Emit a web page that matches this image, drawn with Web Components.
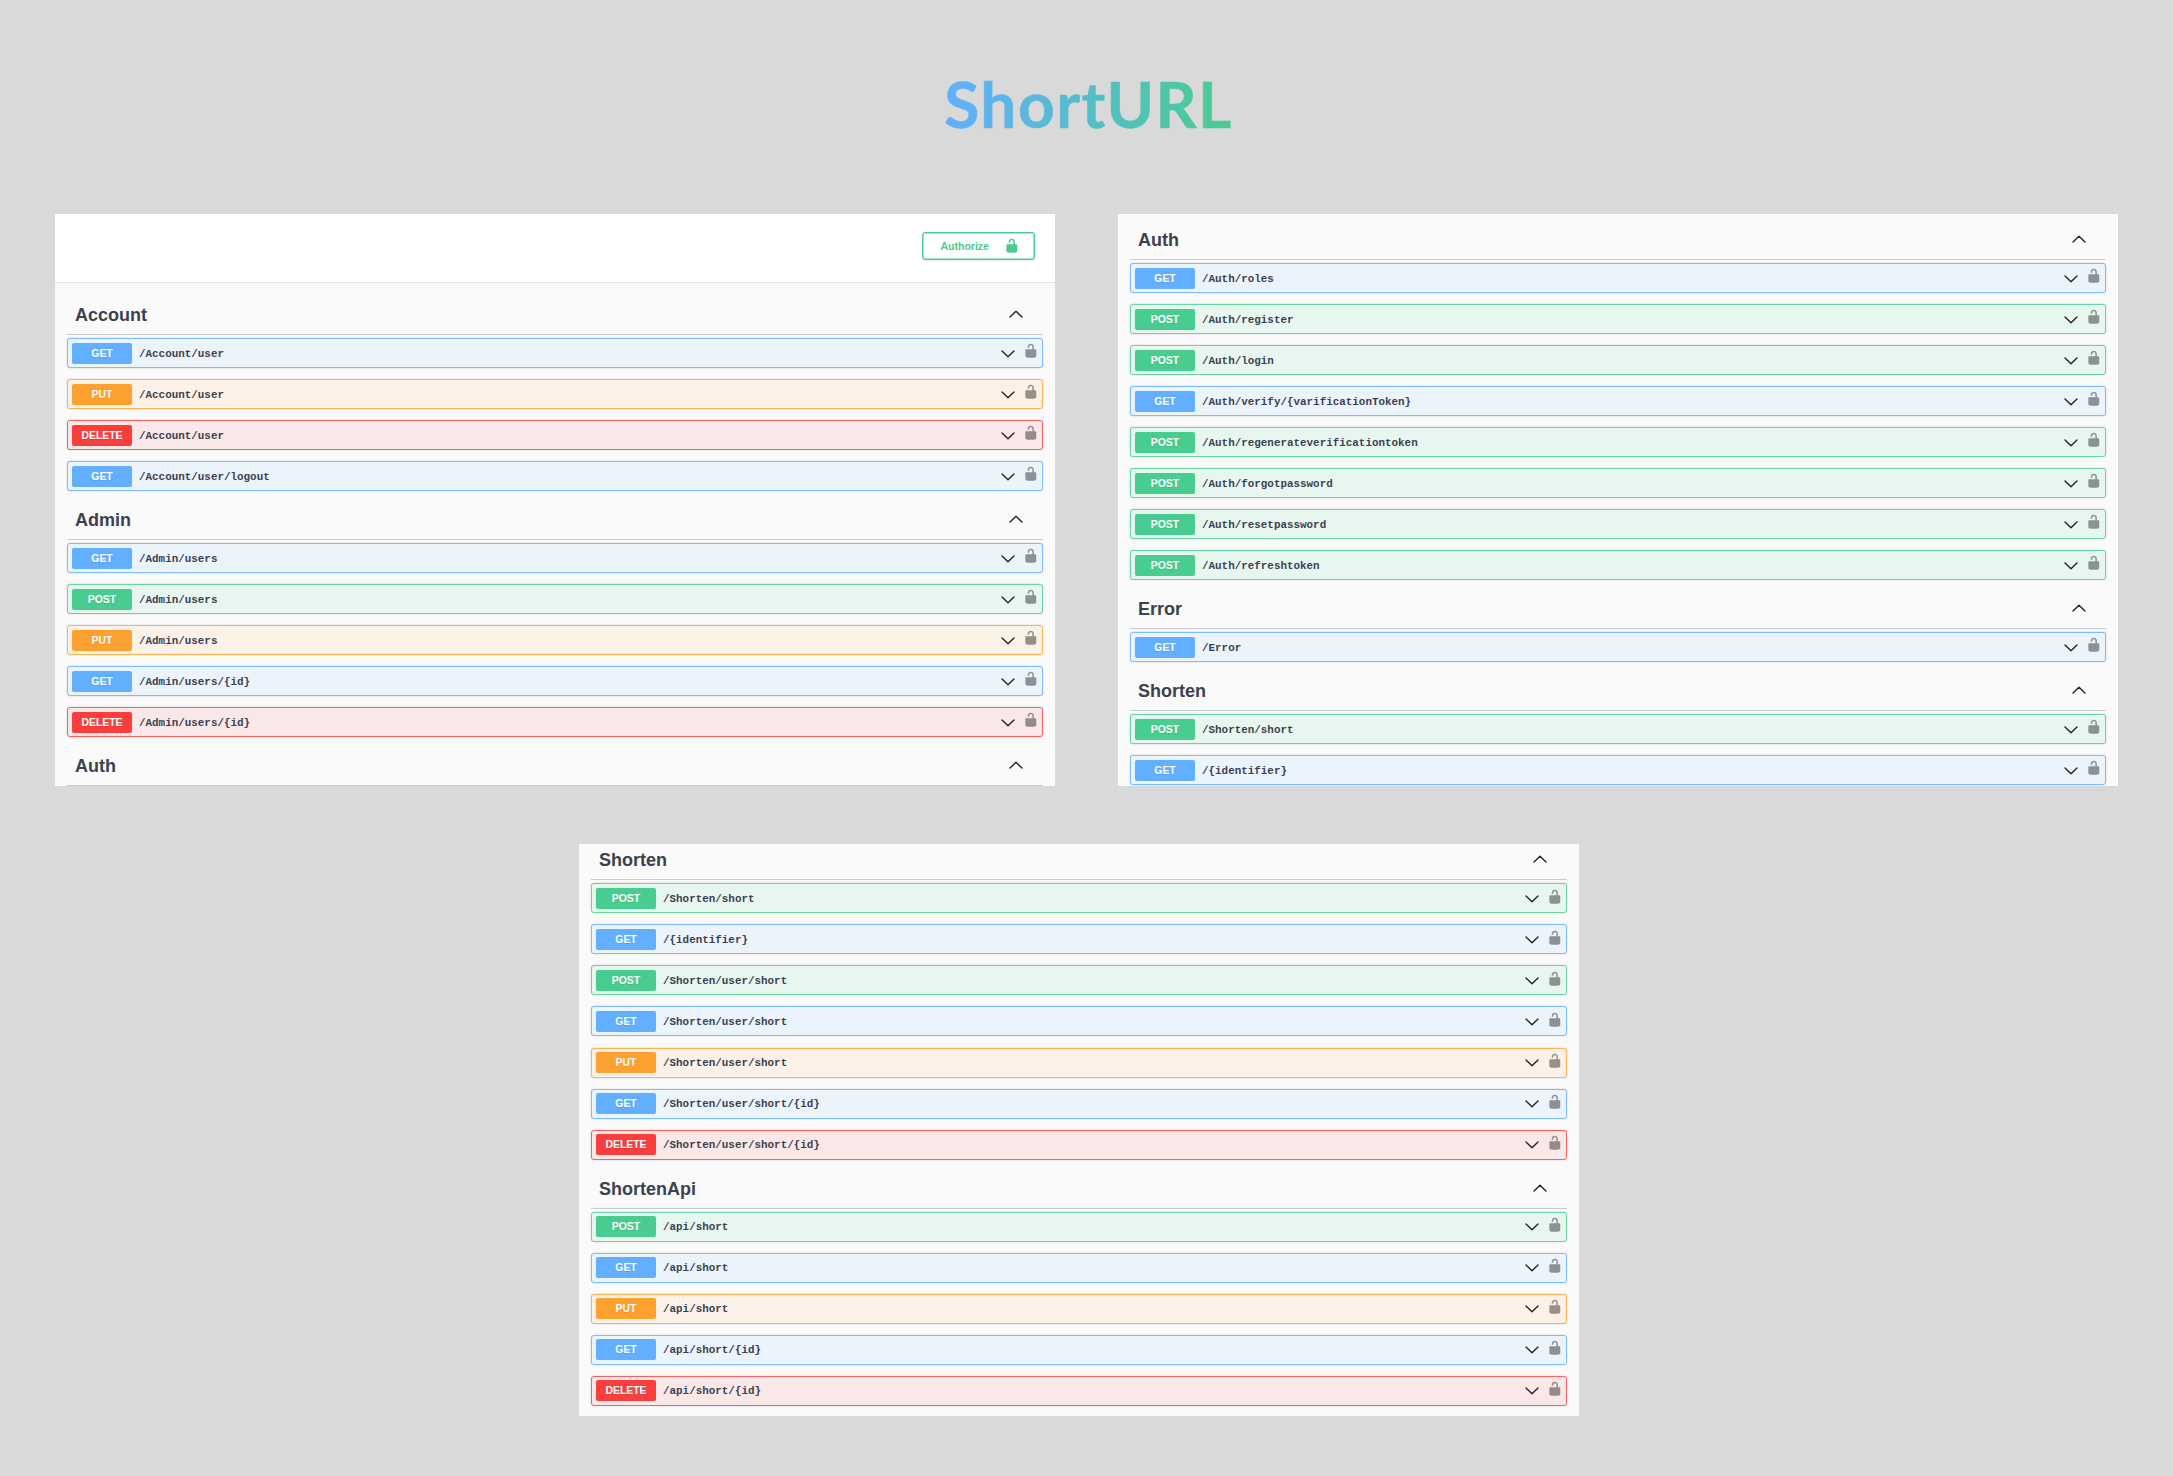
<!DOCTYPE html>
<html lang="en"><head><meta charset="utf-8"><title>ShortURL</title>
<style>html,body{margin:0;height:100%;background:#d9d9d9;overflow:hidden}</style></head><body>
<api-board>
  <api-panel id="a">
    <auth-bar slot="bar">Authorize</auth-bar>
    <api-section heading="Account">
      <api-route method="GET">/Account/user</api-route>
      <api-route method="PUT">/Account/user</api-route>
      <api-route method="DELETE">/Account/user</api-route>
      <api-route method="GET">/Account/user/logout</api-route>
    </api-section>
    <api-section heading="Admin">
      <api-route method="GET">/Admin/users</api-route>
      <api-route method="POST">/Admin/users</api-route>
      <api-route method="PUT">/Admin/users</api-route>
      <api-route method="GET">/Admin/users/{id}</api-route>
      <api-route method="DELETE">/Admin/users/{id}</api-route>
    </api-section>
    <api-section heading="Auth"></api-section>
  </api-panel>
  <api-panel id="b">
    <api-section heading="Auth">
      <api-route method="GET">/Auth/roles</api-route>
      <api-route method="POST">/Auth/register</api-route>
      <api-route method="POST">/Auth/login</api-route>
      <api-route method="GET">/Auth/verify/{varificationToken}</api-route>
      <api-route method="POST">/Auth/regenerateverificationtoken</api-route>
      <api-route method="POST">/Auth/forgotpassword</api-route>
      <api-route method="POST">/Auth/resetpassword</api-route>
      <api-route method="POST">/Auth/refreshtoken</api-route>
    </api-section>
    <api-section heading="Error">
      <api-route method="GET">/Error</api-route>
    </api-section>
    <api-section heading="Shorten">
      <api-route method="POST">/Shorten/short</api-route>
      <api-route method="GET">/{identifier}</api-route>
    </api-section>
  </api-panel>
  <api-panel slot="lower" id="c">
    <api-section heading="Shorten">
      <api-route method="POST">/Shorten/short</api-route>
      <api-route method="GET">/{identifier}</api-route>
      <api-route method="POST">/Shorten/user/short</api-route>
      <api-route method="GET">/Shorten/user/short</api-route>
      <api-route method="PUT">/Shorten/user/short</api-route>
      <api-route method="GET">/Shorten/user/short/{id}</api-route>
      <api-route method="DELETE">/Shorten/user/short/{id}</api-route>
    </api-section>
    <api-section heading="ShortenApi">
      <api-route method="POST">/api/short</api-route>
      <api-route method="GET">/api/short</api-route>
      <api-route method="PUT">/api/short</api-route>
      <api-route method="GET">/api/short/{id}</api-route>
      <api-route method="DELETE">/api/short/{id}</api-route>
    </api-section>
  </api-panel>
</api-board>
<script>
const define = (name, html) => customElements.define(name, class extends HTMLElement {
  connectedCallback() {
    if (!this.shadowRoot) this.attachShadow({mode: 'open'}).innerHTML = html(this);
  }
});

define('lock-icon', () => `<style>:host{display:block;flex:none;width:15.6px;height:15.6px}svg{display:block;width:100%;height:100%}</style>
<svg viewBox="0 0 20 20"><path fill="currentColor" d="M15.8 8H14V5.6C14 2.703 12.665 1 10 1 7.334 1 6 2.703 6 5.6V6h2v-.801C8 3.754 8.797 3 10 3c1.203 0 2 .754 2 2.199V8H4c-.553 0-1 .646-1 1.199V17c0 .549.428 1.139.951 1.307l1.197.387C5.672 18.861 6.55 19 7.1 19h5.8c.549 0 1.428-.139 1.951-.307l1.196-.387c.524-.167.953-.757.953-1.306V9.199C17 8.646 16.352 8 15.8 8z"/></svg>`);

define('chevron-icon', el => `<style>:host{display:block;flex:none;width:14px;height:8px}svg{display:block;width:100%;height:100%}</style>
<svg viewBox="0 0 14 8" fill="none" stroke="#222" stroke-width="1.4" stroke-linecap="round" stroke-linejoin="round"><path d="${el.hasAttribute('up') ? 'M1 7 7 1.2 13 7' : 'M1 1 7 6.8 13 1'}"/></svg>`);

define('api-route', el => `<style>
:host{display:flex;box-sizing:border-box;align-items:center;height:30px;margin-bottom:var(--gap,11px);padding:0 3.4px 0 4px;border:1px solid color-mix(in srgb,var(--c) 82%,white);border-radius:3px;background:var(--bg);box-shadow:0 0 2px rgba(0,0,0,.19)}
:host([method=GET]){--c:#61affe;--bg:#ebf3fb}
:host([method=POST]){--c:#49cc90;--bg:#e8f6f0}
:host([method=PUT]){--c:#fca130;--bg:#fbf1e6}
:host([method=DELETE]){--c:#f93e3e;--bg:#fae7e7}
.m{width:60px;height:21px;border-radius:2px;background:var(--c);color:#fff;font:bold 10.4px/21px "Liberation Sans",Arial,sans-serif;text-align:center;text-shadow:0 1px 0 rgba(0,0,0,.1)}
.p{flex:1;margin-left:7px;font:bold 10.9px/20px "Liberation Mono",monospace;color:#3b4151;padding-top:1px}
chevron-icon{margin-top:1px}
lock-icon{color:#000;opacity:.4;margin:0 0 3.6px 7.6px}
</style><div class="m">${el.getAttribute('method')}</div><div class="p"><slot></slot></div><chevron-icon></chevron-icon><lock-icon></lock-icon>`);

define('api-section', el => `<style>
:host{display:block}
header{display:flex;box-sizing:border-box;height:38px;margin-bottom:3px;padding:0 20.4px 1px 8px;align-items:center;justify-content:space-between;border-bottom:1px solid rgba(59,65,81,.25)}
h3{margin:0;font:bold 18px/36px "Liberation Sans",Arial,sans-serif;color:#3b4151}
chevron-icon{margin-bottom:2px}
</style><header><h3>${el.getAttribute('heading')}</h3><chevron-icon up></chevron-icon></header><slot></slot>`);

define('auth-bar', () => `<style>
:host{display:flex;box-sizing:border-box;height:69px;padding:18px 20px 0 0;margin-bottom:14px;justify-content:flex-end;background:#fff;border-bottom:1px solid #e2e3e4}
button{display:flex;box-sizing:border-box;width:113px;height:28px;padding:0 14.6px 0 17.5px;align-items:center;justify-content:space-between;border:1px solid #49cc90;border-radius:3px;background:none;box-shadow:inset 0 0 0 .5px #49cc90,0 1px 2px rgba(0,0,0,.1);color:#49cc90;font:bold 10.5px/16px "Liberation Sans",Arial,sans-serif}
lock-icon{margin-bottom:1px}
</style><button><slot></slot><lock-icon></lock-icon></button>`);

define('api-panel', () => `<style>
:host{display:block;flex:none;width:1000px;height:572px;overflow:hidden;background:#fafafa}
:host(#b) .list{margin-top:8px}
:host(#c) .list{margin-top:-1.7px;--gap:11.05px}
.list{padding:0 12px}
</style><slot name="bar"></slot><div class="list"><slot></slot></div>`);

define('api-board', () => `<style>
:host{display:flex;box-sizing:border-box;flex-direction:column;width:2173px;height:1476px;padding:0 55px}
h1{align-self:center;height:84px;margin:62px 0 68px 4px;font:700 64px/84px Lato,sans-serif;letter-spacing:1.5px;-webkit-text-stroke:.6px transparent;color:transparent;background:linear-gradient(90deg,#61affe,#49cc90);-webkit-background-clip:text;background-clip:text}
.row{display:flex;gap:63px}
.lower{display:flex;margin:58px 0 0 524px}
</style><h1>ShortURL</h1><div class="row"><slot></slot></div><div class="lower"><slot name="lower"></slot></div>`);
</script></body></html>
